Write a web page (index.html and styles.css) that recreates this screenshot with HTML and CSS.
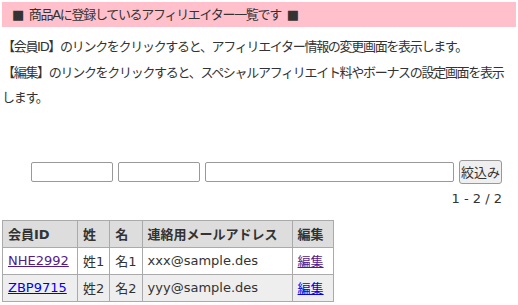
FILE: index.html
```html
<!DOCTYPE html>
<html lang="ja">
<head>
    <meta charset="UTF-8">
    <title>アフィリエイター一覧</title>
    <link rel="stylesheet" href="styles.css">
</head>
<body>
    <div class="page-title">■ 商品Aに登録しているアフィリエイター一覧です ■</div>

    <p class="guide">
        【会員ID】のリンクをクリックすると、アフィリエイター情報の変更画面を表示します。<br>
        【編集】のリンクをクリックすると、スペシャルアフィリエイト料やボーナスの設定画面を表示します。
    </p>

    <form class="filter-form">
        <input type="text" class="field field-short" name="member_id">
        <input type="text" class="field field-short" name="name">
        <input type="text" class="field field-long" name="mail">
        <button type="submit" class="filter-btn">絞込み</button>
    </form>
    <div class="pager">1 - 2 / 2</div>

    <table class="member-list">
        <tr>
            <th class="col-id">会員ID</th>
            <th class="col-name">姓</th>
            <th class="col-name">名</th>
            <th class="col-mail">連絡用メールアドレス</th>
            <th class="col-edit">編集</th>
        </tr>
        <tr>
            <td><a href="#" class="visited">NHE2992</a></td>
            <td>姓1</td>
            <td>名1</td>
            <td>xxx@sample.des</td>
            <td><a href="#" class="visited">編集</a></td>
        </tr>
        <tr class="even">
            <td><a href="#">ZBP9715</a></td>
            <td>姓2</td>
            <td>名2</td>
            <td>yyy@sample.des</td>
            <td><a href="#">編集</a></td>
        </tr>
    </table>
</body>
</html>
```

FILE: styles.css
```css
body {
    margin: 0;
    padding: 0 2px;
    font-family: "DejaVu Sans", "Noto Sans CJK JP", sans-serif;
    font-size: 13px;
    color: #333;
}
.page-title {
    margin-top: 2px;
    height: 25px;
    line-height: 25px;
    padding-left: 10px;
    background: #ffc0cb;
    letter-spacing: -1.3px;
    word-spacing: 3px;
}
.guide {
    margin: 7px 0 0;
    padding-right: 4px;
    line-height: 25.5px;
    letter-spacing: -1.3px;
}
.filter-form {
    display: flex;
    justify-content: flex-end;
    align-items: center;
    gap: 5px;
    margin-top: 49px;
    padding-right: 14px;
}
.field {
    box-sizing: border-box;
    height: 20px;
    border: 1px solid #999;
    border-radius: 2px;
    padding: 0 3px;
}
.field-short {
    width: 82px;
}
.field-long {
    width: 249px;
}
.filter-btn {
    height: 24px;
    padding: 0 1px;
    font-family: inherit;
    font-size: 13px;
    color: #333;
    background: #efefef;
    border: 1px solid #999;
    border-radius: 3px;
}
.pager {
    text-align: right;
    padding-right: 14px;
    margin-top: 5px;
    line-height: 20px;
}
.member-list {
    margin-top: 11px;
    border-collapse: collapse;
}
.member-list th,
.member-list td {
    border: 1px solid #aaa;
    height: 26px;
    padding: 0 5px;
    text-align: left;
    white-space: nowrap;
}
.member-list th {
    background: #ddd;
}
.member-list .col-id {
    width: 64px;
}
.member-list .col-name {
    width: 21px;
}
.member-list .col-mail {
    width: 139px;
}
.member-list .col-edit {
    width: 30px;
}
.member-list .even td {
    background: #eee;
}
.member-list a {
    color: #0000ee;
}
.member-list a.visited {
    color: #551a8b;
}
```
